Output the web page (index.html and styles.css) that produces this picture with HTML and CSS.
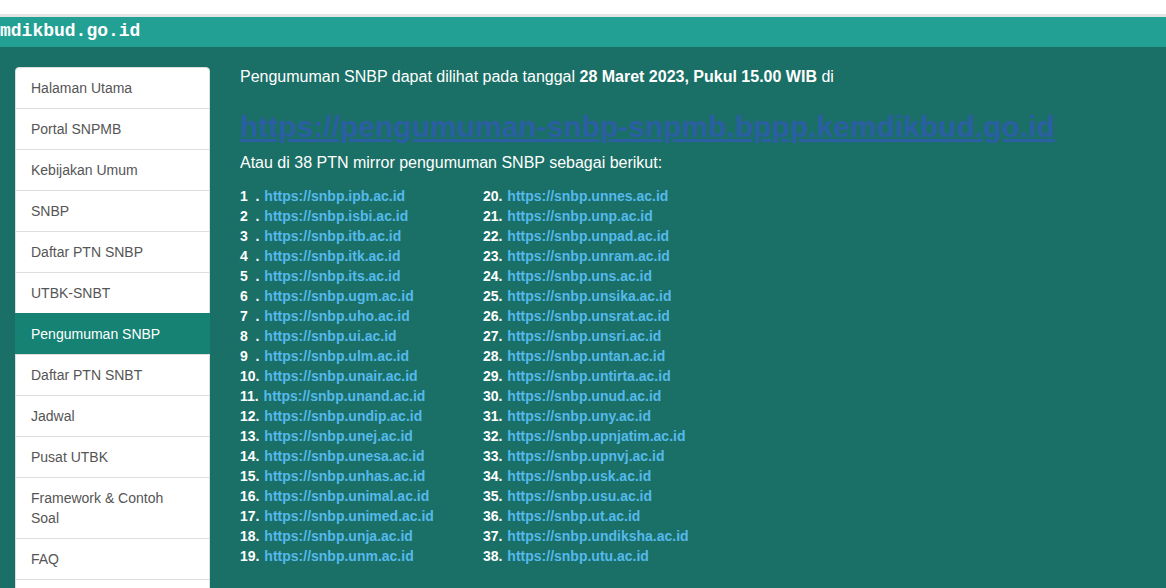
FILE: index.html
```html
<!DOCTYPE html>
<html>
<head>
<meta charset="utf-8">
<link rel="stylesheet" href="styles.css">
</head>
<body>
<div class="topstrip"></div>
<div class="header"><span class="brand">mdikbud.go.id</span></div>
<div class="page">
  <nav class="sidebar">
    <a class="item">Halaman Utama</a>
    <a class="item">Portal SNPMB</a>
    <a class="item">Kebijakan Umum</a>
    <a class="item">SNBP</a>
    <a class="item">Daftar PTN SNBP</a>
    <a class="item">UTBK-SNBT</a>
    <a class="item active">Pengumuman SNBP</a>
    <a class="item">Daftar PTN SNBT</a>
    <a class="item">Jadwal</a>
    <a class="item">Pusat UTBK</a>
    <a class="item">Framework &amp; Contoh Soal</a>
    <a class="item">FAQ</a>
    <a class="item">&nbsp;</a>
  </nav>
  <main class="content">
    <p class="lead">Pengumuman SNBP dapat dilihat pada tanggal <b>28 Maret 2023, Pukul 15.00 WIB</b> di</p>
    <h2 class="biglink"><a href="#">https://pengumuman-snbp-snpmb.bppp.kemdikbud.go.id</a></h2>
    <p class="lead sub">Atau di 38 PTN mirror pengumuman SNBP sebagai berikut:</p>
    <div class="lists">
      <ul class="col">
        <li><span class="n">1&nbsp;&nbsp;.</span> <a>https://snbp.ipb.ac.id</a></li>
        <li><span class="n">2&nbsp;&nbsp;.</span> <a>https://snbp.isbi.ac.id</a></li>
        <li><span class="n">3&nbsp;&nbsp;.</span> <a>https://snbp.itb.ac.id</a></li>
        <li><span class="n">4&nbsp;&nbsp;.</span> <a>https://snbp.itk.ac.id</a></li>
        <li><span class="n">5&nbsp;&nbsp;.</span> <a>https://snbp.its.ac.id</a></li>
        <li><span class="n">6&nbsp;&nbsp;.</span> <a>https://snbp.ugm.ac.id</a></li>
        <li><span class="n">7&nbsp;&nbsp;.</span> <a>https://snbp.uho.ac.id</a></li>
        <li><span class="n">8&nbsp;&nbsp;.</span> <a>https://snbp.ui.ac.id</a></li>
        <li><span class="n">9&nbsp;&nbsp;.</span> <a>https://snbp.ulm.ac.id</a></li>
        <li><span class="n">10.</span> <a>https://snbp.unair.ac.id</a></li>
        <li><span class="n">11.</span> <a>https://snbp.unand.ac.id</a></li>
        <li><span class="n">12.</span> <a>https://snbp.undip.ac.id</a></li>
        <li><span class="n">13.</span> <a>https://snbp.unej.ac.id</a></li>
        <li><span class="n">14.</span> <a>https://snbp.unesa.ac.id</a></li>
        <li><span class="n">15.</span> <a>https://snbp.unhas.ac.id</a></li>
        <li><span class="n">16.</span> <a>https://snbp.unimal.ac.id</a></li>
        <li><span class="n">17.</span> <a>https://snbp.unimed.ac.id</a></li>
        <li><span class="n">18.</span> <a>https://snbp.unja.ac.id</a></li>
        <li><span class="n">19.</span> <a>https://snbp.unm.ac.id</a></li>
      </ul>
      <ul class="col">
        <li><span class="n">20.</span> <a>https://snbp.unnes.ac.id</a></li>
        <li><span class="n">21.</span> <a>https://snbp.unp.ac.id</a></li>
        <li><span class="n">22.</span> <a>https://snbp.unpad.ac.id</a></li>
        <li><span class="n">23.</span> <a>https://snbp.unram.ac.id</a></li>
        <li><span class="n">24.</span> <a>https://snbp.uns.ac.id</a></li>
        <li><span class="n">25.</span> <a>https://snbp.unsika.ac.id</a></li>
        <li><span class="n">26.</span> <a>https://snbp.unsrat.ac.id</a></li>
        <li><span class="n">27.</span> <a>https://snbp.unsri.ac.id</a></li>
        <li><span class="n">28.</span> <a>https://snbp.untan.ac.id</a></li>
        <li><span class="n">29.</span> <a>https://snbp.untirta.ac.id</a></li>
        <li><span class="n">30.</span> <a>https://snbp.unud.ac.id</a></li>
        <li><span class="n">31.</span> <a>https://snbp.uny.ac.id</a></li>
        <li><span class="n">32.</span> <a>https://snbp.upnjatim.ac.id</a></li>
        <li><span class="n">33.</span> <a>https://snbp.upnvj.ac.id</a></li>
        <li><span class="n">34.</span> <a>https://snbp.usk.ac.id</a></li>
        <li><span class="n">35.</span> <a>https://snbp.usu.ac.id</a></li>
        <li><span class="n">36.</span> <a>https://snbp.ut.ac.id</a></li>
        <li><span class="n">37.</span> <a>https://snbp.undiksha.ac.id</a></li>
        <li><span class="n">38.</span> <a>https://snbp.utu.ac.id</a></li>
      </ul>
    </div>
  </main>
</div>
</body>
</html>
```

FILE: styles.css
```css
html, body {
  margin: 0;
  padding: 0;
  height: 100%;
  overflow: hidden;
}
body {
  background: #1a6f66;
  font-family: "Liberation Sans", Arial, sans-serif;
  font-size: 14px;
  line-height: 20px;
  color: #fff;
}
.topstrip {
  height: 14px;
  background: #fff;
  border-bottom: 3px solid #e4e4e4;
}
.header {
  height: 30px;
  background: #23a094;
  display: flex;
  align-items: center;
}
.brand {
  font-family: "Liberation Mono", "Courier New", monospace;
  font-weight: bold;
  font-size: 18px;
  color: #fff;
  line-height: 20px;
  margin-top: -3px;
}
.page {
  display: flex;
  padding: 20px 0 0 15px;
  gap: 30px;
}
.sidebar {
  width: 195px;
  flex: none;
  display: flex;
  flex-direction: column;
}
.item {
  display: block;
  background: #fff;
  border: 1px solid #ddd;
  margin-bottom: -1px;
  padding: 10px 15px;
  color: #555;
  font-size: 14px;
  line-height: 20px;
}
.item:first-child {
  border-top-left-radius: 4px;
  border-top-right-radius: 4px;
}
.item.active {
  background: #168274;
  border-color: #168274;
  color: #fff;
}
.content {
  flex: 1;
}
.lead {
  margin: 0;
  font-size: 16px;
  line-height: 20px;
  color: #fff;
}
.biglink {
  margin: 22px 0 0;
  font-size: 30px;
  line-height: 36px;
  font-weight: bold;
}
.biglink a {
  color: #2b5ea3;
  text-decoration: underline;
}
.sub {
  margin-top: 8px;
}
.lists {
  display: flex;
  margin-top: 13px;
}
.col {
  list-style: none;
  margin: 0;
  padding: 0;
  font-weight: bold;
  font-size: 14px;
  line-height: 20px;
}
.col:first-child {
  width: 243px;
}
.n {
  color: #fff;
}
.col a {
  color: #55b9ec;
  margin-left: 1px;
}
```
